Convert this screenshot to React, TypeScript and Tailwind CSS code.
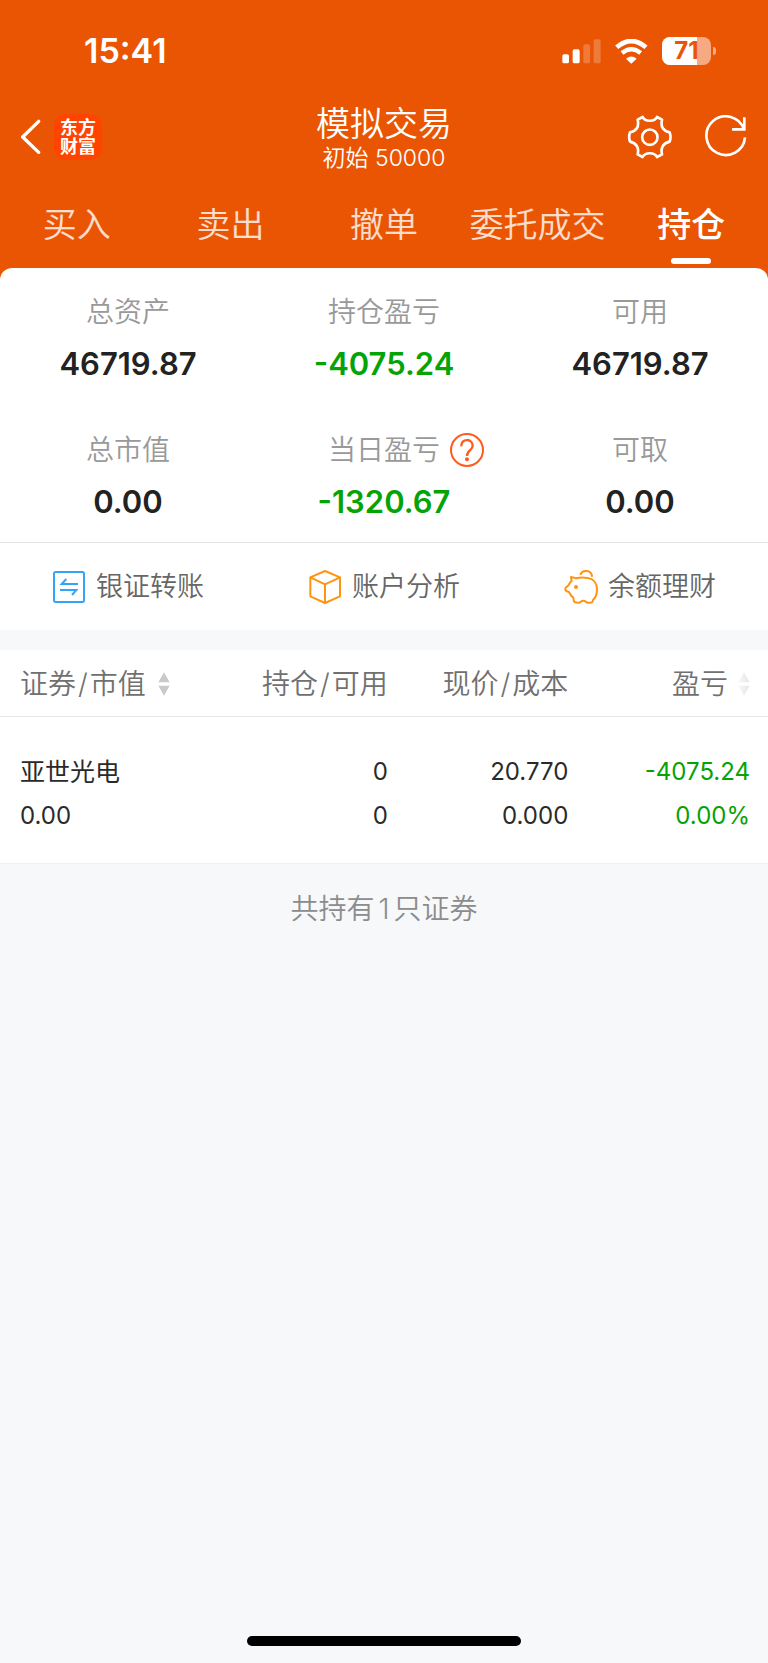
import type { ReactNode } from 'react';

const TABS = ['买入', '卖出', '撤单', '委托成交', '持仓'];
const ACTIVE_TAB = '持仓';

type Stat = { label: string; value: string; help?: boolean };

const STATS: Stat[] = [
  { label: '总资产', value: '46719.87' },
  { label: '持仓盈亏', value: '-4075.24' },
  { label: '可用', value: '46719.87' },
  { label: '总市值', value: '0.00' },
  { label: '当日盈亏', value: '-1320.67', help: true },
  { label: '可取', value: '0.00' },
];

const HOLDINGS = [
  {
    name: '亚世光电',
    marketValue: '0.00',
    position: '0',
    available: '0',
    price: '20.770',
    cost: '0.000',
    profit: '-4075.24',
    profitRate: '0.00%',
  },
];

function SignalIcon() {
  return (
    <svg width="39" height="25" viewBox="532 56 117 75" fill="#fff" aria-hidden="true">
      <rect x="533" y="102" width="20" height="27" rx="5" />
      <rect x="564" y="87" width="21" height="42" rx="5" />
      <rect x="596" y="72" width="20" height="57" rx="5" opacity=".22" />
      <rect x="627" y="57" width="21" height="72" rx="5" opacity=".22" />
    </svg>
  );
}

function WifiIcon() {
  return (
    <svg width="33" height="25" viewBox="692 56 99 75" fill="none" stroke="#fff" aria-hidden="true">
      <path d="M697 81Q741 43 785 81" strokeWidth="14" />
      <path d="M713 98Q741 75 769 98" strokeWidth="13" />
      <path d="M741 130L725 115Q741 102 757 115Z" fill="#fff" stroke="none" />
    </svg>
  );
}

function Battery({ level }: { level: number }) {
  return (
    <div className="flex items-center gap-0.5">
      <div className="relative h-7 w-[49px] overflow-hidden rounded-lg bg-white/50">
        <div className="absolute inset-y-0 left-0 bg-white" style={{ width: `${level}%` }} />
        <span className="absolute inset-0 text-center text-2xl leading-7 font-bold text-[#ea5504]">
          {level}
        </span>
      </div>
      <span className="h-2 w-[3px] rounded-r-full bg-white/50" />
    </div>
  );
}

function BackIcon() {
  return (
    <svg width="22" height="36" viewBox="60 295 66 108" fill="none" stroke="#fff" strokeWidth="10" strokeLinecap="round" strokeLinejoin="round">
      <path d="M116 302L68 349L116 395" />
    </svg>
  );
}

function SettingsIcon() {
  return (
    <svg width="46" height="44" viewBox="729 282 138 132" fill="none" stroke="#fff" strokeWidth="8" strokeLinejoin="round">
      <path d="M776 288C783 303 812 303 819 288L834 296C829 318 838 330 857 334Q862 348 857 362C838 366 829 380 834 400L819 408C812 393 783 393 776 408L761 400C766 380 757 366 738 362Q733 348 738 334C757 330 766 318 761 296Z" />
      <circle cx="797.5" cy="348.5" r="23" />
    </svg>
  );
}

function RefreshIcon() {
  return (
    <svg width="44" height="44" viewBox="960 281 132 132" fill="none" stroke="#fff" strokeWidth="8">
      <path d="M1083 348A58 58 0 1 1 1080 324" />
      <path d="M1081 288V324H1044" />
    </svg>
  );
}

function HelpIcon() {
  return (
    <svg width="34" height="34" viewBox="198 99 102 102" fill="none" stroke="#ff5a1f" strokeWidth="6">
      <circle cx="249" cy="150" r="48" />
      <path d="M232 139C230 114 267 114 266 138C265 151 249 150 249 168" strokeWidth="7" />
      <circle cx="249" cy="178" r="6" fill="#ff5a1f" stroke="none" />
    </svg>
  );
}

function TransferIcon() {
  return (
    <svg width="34" height="34" viewBox="151 509 102 102" fill="none" stroke="#32a5fb" strokeWidth="6">
      <rect x="157" y="515" width="90" height="90" rx="5" />
      <path d="M229 551H180L194 536M175 569H224L211 584" />
    </svg>
  );
}

function CubeIcon() {
  return (
    <svg width="34" height="34" viewBox="918 509 102 102" fill="none" stroke="#ff9412" strokeWidth="6" strokeLinejoin="round">
      <path d="M969 512L1014 531V588L969 608L925 588V531ZM925 531L969 552L1014 531M969 552V608" />
    </svg>
  );
}

function PiggyIcon() {
  return (
    <svg width="34" height="34" viewBox="534 509 102 102" fill="none" stroke="#ff9412" strokeWidth="6" strokeLinejoin="round" strokeLinecap="round">
      <path d="M555 530C563 530 566 536 574 533Q588 530 605 533C622 535 633 548 633 567C633 583 627 594 621 599C620 609 615 607 606 607C599 607 600 601 592 601C583 601 587 607 578 607C564 607 563 606 562 592C554 587 552 579 549 575C541 573 538 573 538 567C538 558 543 562 548 554C550 549 554 545 557 541C557 536 554 534 555 530Z" />
      <path d="M584 521C590 509 615 507 618 527" />
      <circle cx="570" cy="560" r="6" fill="#ff9412" stroke="none" />
    </svg>
  );
}

function SortIcon({ faded = false }: { faded?: boolean }) {
  return (
    <svg className="shrink-0" width="12" height="24" viewBox="0 0 36 72" fill={faded ? 'url(#sort-fade)' : '#c9c9c9'} aria-hidden="true">
      <defs>
        <linearGradient id="sort-fade">
          <stop stopColor="#f7f7f7" />
          <stop offset="1" stopColor="#e6e6e6" />
        </linearGradient>
      </defs>
      <path d="M18 1L35 31H1ZM18 71L1 41H35Z" />
    </svg>
  );
}

const ACTIONS: { label: string; icon: ReactNode }[] = [
  { label: '银证转账', icon: <TransferIcon /> },
  { label: '账户分析', icon: <CubeIcon /> },
  { label: '余额理财', icon: <PiggyIcon /> },
];

function StatCell({ label, value, help }: Stat) {
  const color = value.startsWith('-') ? 'text-[#05a305]' : 'text-[#222]';

  return (
    <div className="flex flex-col gap-3 text-center">
      <dt className="grid grid-cols-[1fr_auto_1fr] items-center text-[28px] leading-10 font-[350] text-[#999]">
        <span className="col-start-2">{label}</span>
        {help && (
          <button type="button" aria-label="当日盈亏说明" className="justify-self-start pl-2.5">
            <HelpIcon />
          </button>
        )}
      </dt>
      <dd className={`text-[31px] leading-10 font-semibold ${color}`}>{value}</dd>
    </div>
  );
}

/** Column heading made of two names with a slash between them. */
function PairLabel({ first, second }: { first: string; second: string }) {
  return (
    <span>
      {first}
      <span className="mx-0.5">/</span>
      {second}
    </span>
  );
}

export default function App() {
  return (
    <div className="flex min-h-screen flex-col bg-[#f7f8fa] font-['Inter','Noto_Sans_CJK_SC',sans-serif]">
      <header className="bg-[#ea5504] text-white">
        <div className="flex items-center justify-between pt-[27px] pr-[52px] pb-[27px] pl-[84px]">
          <time className="text-[34px] leading-12 font-semibold">15:41</time>
          <div className="flex items-center gap-3.5">
            <SignalIcon />
            <WifiIcon />
            <Battery level={71} />
          </div>
        </div>

        <div className="grid grid-cols-[1fr_auto_1fr] items-center px-5">
          <div className="flex items-center gap-3">
            <button type="button" aria-label="返回">
              <BackIcon />
            </button>
            <a
              href="#home"
              className="rounded-xl bg-[#ff4400] px-1.5 py-1 text-center text-[18px] leading-[19px] font-bold"
            >
              东方
              <br />
              财富
            </a>
          </div>
          <div className="pt-0.5 text-center font-[350]">
            <h1 className="text-[34px] leading-10">模拟交易</h1>
            <p className="text-[23px] leading-7">初始 50000</p>
          </div>
          <div className="flex items-center justify-end gap-[31px]">
            <button type="button" aria-label="设置">
              <SettingsIcon />
            </button>
            <button type="button" aria-label="刷新">
              <RefreshIcon />
            </button>
          </div>
        </div>

        <nav className="grid grid-cols-5 pt-[27px] pb-1">
          {TABS.map((tab) => {
            const active = tab === ACTIVE_TAB;
            return (
              <button
                key={tab}
                type="button"
                aria-current={active ? 'page' : undefined}
                className="flex flex-col items-center gap-[7px] whitespace-nowrap"
              >
                <span
                  className={`text-[34px] leading-[52px] ${active ? 'font-medium' : 'font-[350] text-white/80'}`}
                >
                  {tab}
                </span>
                <span className={`h-1.5 w-10 rounded-full ${active ? 'bg-white' : ''}`} />
              </button>
            );
          })}
        </nav>
      </header>

      <div className="bg-[#ea5504]">
        <section className="rounded-t-xl bg-white">
          <dl className="grid grid-cols-3 gap-y-[46px] border-b border-[#e4e4e4] pt-6 pb-5">
            {STATS.map((stat) => (
              <StatCell key={stat.label} {...stat} />
            ))}
          </dl>
          <div className="grid grid-cols-3">
            {ACTIONS.map(({ label, icon }) => (
              <button
                key={label}
                type="button"
                className="flex items-center justify-center gap-2.5 pt-6 pb-[23px] text-[27px] leading-10 font-[350] text-[#666]"
              >
                {icon}
                {label}
              </button>
            ))}
          </div>
        </section>
      </div>

      <table className="mt-5 w-full table-fixed bg-white">
        <thead>
          <tr className="border-b border-[#e8e8e8] text-right text-[28px] leading-10 whitespace-nowrap text-[#707070]">
            <th scope="col" className="w-[28%] pt-3.5 pb-3 pl-5 font-[350]">
              <button type="button" className="flex items-center gap-3">
                <PairLabel first="证券" second="市值" />
                <SortIcon />
              </button>
            </th>
            <th scope="col" className="w-[22.5%] pt-3.5 pb-3 font-[350]">
              <PairLabel first="持仓" second="可用" />
            </th>
            <th scope="col" className="w-[23.5%] pt-3.5 pb-3 font-[350]">
              <PairLabel first="现价" second="成本" />
            </th>
            <th scope="col" className="pt-3.5 pr-[18px] pb-3 font-[350]">
              <button type="button" className="ml-auto flex items-center gap-2.5">
                盈亏
                <SortIcon faded />
              </button>
            </th>
          </tr>
        </thead>
        <tbody>
          {HOLDINGS.map((item) => (
            <tr
              key={item.name}
              className="border-b border-[#efefef] text-right text-2xl leading-11 text-[#2a2a2a]"
            >
              <td className="pt-[33px] pb-[25px] pl-5 text-left">
                <div className="text-[25px] leading-11">{item.name}</div>
                <div>{item.marketValue}</div>
              </td>
              <td className="pt-[33px] pb-[25px]">
                <div>{item.position}</div>
                <div>{item.available}</div>
              </td>
              <td className="pt-[33px] pb-[25px]">
                <div>{item.price}</div>
                <div>{item.cost}</div>
              </td>
              <td className="pt-[33px] pr-[18px] pb-[25px] text-[#05a305]">
                <div>{item.profit}</div>
                <div>{item.profitRate}</div>
              </td>
            </tr>
          ))}
        </tbody>
      </table>

      <p className="pt-[25px] text-center text-[28px] leading-10 font-[350] text-[#8c8c8c]">
        共持有<span className="mx-1">{HOLDINGS.length}</span>只证券
      </p>

      <div className="mt-auto flex justify-center pb-[17px]">
        <span className="h-2.5 w-[274px] rounded-full bg-black" />
      </div>
    </div>
  );
}
